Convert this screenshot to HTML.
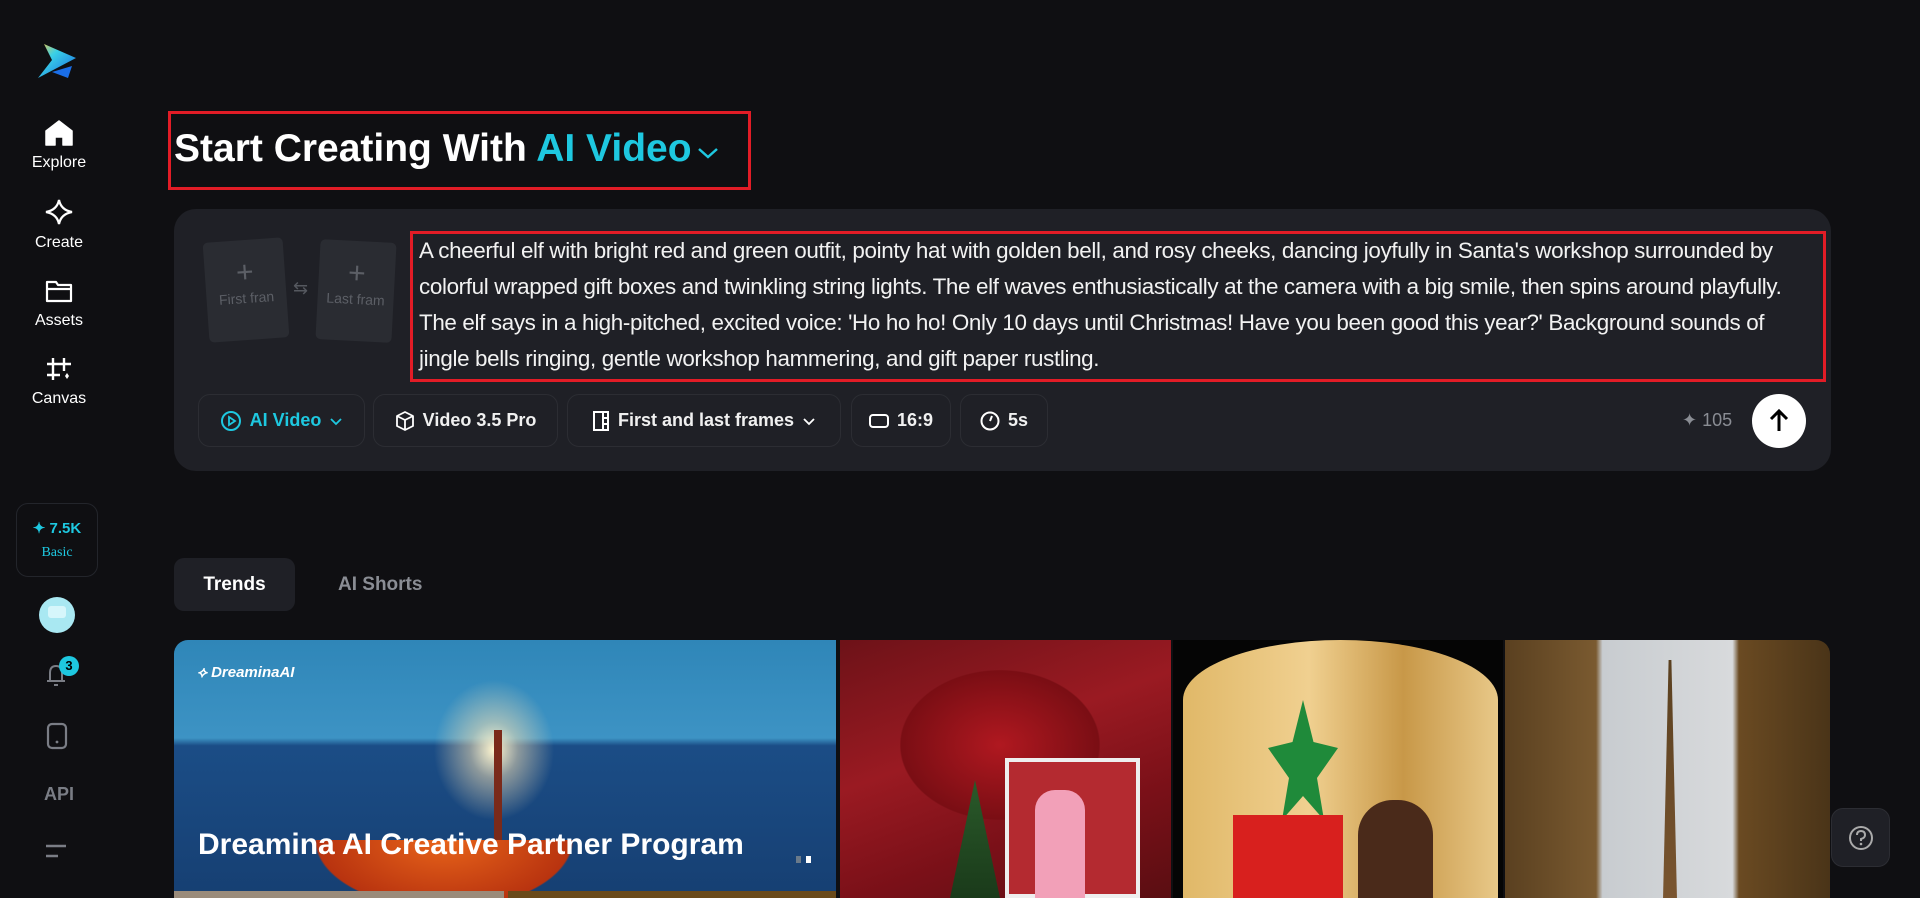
<!DOCTYPE html>
<html><head><meta charset="utf-8"><style>
*{margin:0;padding:0;box-sizing:border-box}
body{width:1920px;height:898px;background:#0f0f12;font-family:"Liberation Sans",sans-serif;color:#fff;overflow:hidden;position:relative}
.abs{position:absolute}
.nav{position:absolute;left:0;width:118px;text-align:center;font-size:16px;color:#fff}
.nav svg{display:block;margin:0 auto 8px}
.btn{position:absolute;top:394px;height:53px;border:1px solid #2c2d33;border-radius:12px;display:flex;align-items:center;justify-content:center;gap:8px;font-size:18px;font-weight:bold;color:#f0f0f0}
.card{position:absolute;top:640px;height:258px;overflow:hidden}
</style></head><body>
<!-- sidebar -->
<svg class="abs" style="left:38px;top:42px" width="40" height="38" viewBox="0 0 40 38"><defs><linearGradient id="lg" x1="0" y1="0" x2="1" y2="1"><stop offset="0" stop-color="#f5c542"/><stop offset=".35" stop-color="#3ad1e6"/><stop offset="1" stop-color="#1565e0"/></linearGradient></defs><path d="M6 2 L14 18 L0 36 L38 16 Z" fill="url(#lg)"/><path d="M14 30 L34 24 L30 36 Z" fill="#1a6ee8"/></svg>
<div class="nav" style="top:120px"><svg width="28" height="26" viewBox="0 0 28 26"><path d="M14 1 L27 11 V25 H18 V17 H10 V25 H1 V11 Z" fill="#fff" stroke="#fff" stroke-linejoin="round" stroke-width="1.5"/></svg>Explore</div>
<div class="nav" style="top:198px"><svg width="30" height="28" viewBox="0 0 30 28"><path d="M15 2 Q17 12 28 14 Q17 16 15 26 Q13 16 2 14 Q13 12 15 2Z" fill="none" stroke="#fff" stroke-width="2.2"/></svg>Create</div>
<div class="nav" style="top:278px"><svg width="28" height="26" viewBox="0 0 28 26"><path d="M2 4 H11 L13 7 H26 V23 H2 Z M2 11 H26" fill="none" stroke="#fff" stroke-width="2.2" stroke-linejoin="round"/></svg>Assets</div>
<div class="nav" style="top:356px"><svg width="28" height="26" viewBox="0 0 28 26"><path d="M8 2 V24 M19 2 V15 M2 8 H26 M2 19 H15" stroke="#fff" stroke-width="2.4"/><path d="M22 17 L24 20 L22 23 L20 20Z" fill="#fff"/></svg>Canvas</div>
<div class="abs" style="left:16px;top:503px;width:82px;height:74px;border:1px solid #23252b;border-radius:12px;text-align:center;color:#1ec8e0">
<div style="margin-top:15px;font-size:15px;font-weight:bold">✦ 7.5K</div>
<div style="margin-top:8px;font-size:14px;font-family:'Liberation Serif',serif">Basic</div></div>
<div class="abs" style="left:39px;top:597px;width:36px;height:36px;border-radius:50%;background:#a9e8f2"><div style="margin:9px auto;width:18px;height:12px;background:#d6f6fb;border-radius:3px"></div></div>
<svg class="abs" style="left:42px;top:660px" width="30" height="28" viewBox="0 0 30 28"><path d="M5 21 H23 M8 21 V13 Q8 6 14 6 Q20 6 20 13 V21 M12 25 H16" fill="none" stroke="#7a7d85" stroke-width="2"/></svg>
<div class="abs" style="left:59px;top:656px;width:20px;height:20px;border-radius:50%;background:#1ec8e0;color:#000;font-size:13px;font-weight:bold;text-align:center;line-height:20px">3</div>
<svg class="abs" style="left:46px;top:722px" width="22" height="28" viewBox="0 0 22 28"><rect x="2" y="2" width="18" height="24" rx="4" fill="none" stroke="#7a7d85" stroke-width="2.2"/><circle cx="11" cy="20" r="1.4" fill="#7a7d85"/></svg>
<div class="abs" style="left:0;width:118px;top:784px;text-align:center;font-size:18px;font-weight:bold;color:#7a7d85">API</div>
<svg class="abs" style="left:46px;top:843px" width="22" height="16"><path d="M0 3 H20 M0 13 H12" stroke="#7a7d85" stroke-width="2.5"/></svg>

<!-- heading -->
<div class="abs" style="left:168px;top:111px;width:583px;height:79px;border:3px solid #e21c26"></div>
<div class="abs" style="left:174px;top:127px;font-size:39px;font-weight:bold;white-space:nowrap">Start Creating With <span style="color:#1ec8e0">AI Video</span><svg width="24" height="16" viewBox="0 0 24 16" style="margin-left:4px"><path d="M3 4 L12 12 L21 4" fill="none" stroke="#1ec8e0" stroke-width="2.5"/></svg></div>

<!-- prompt panel -->
<div class="abs" style="left:174px;top:209px;width:1657px;height:262px;background:#1f2026;border-radius:22px"></div>
<div class="abs" style="left:206px;top:240px;width:80px;height:100px;background:#2a2c32;border-radius:5px;transform:rotate(-4deg);color:#5c5f66;text-align:center;font-size:14px"><div style="font-size:30px;margin-top:16px">+</div>First fran</div>
<div class="abs" style="left:293px;top:278px;color:#55585f;font-size:18px">⇆</div>
<div class="abs" style="left:318px;top:241px;width:76px;height:100px;background:#2a2c32;border-radius:5px;transform:rotate(3deg);color:#5c5f66;text-align:center;font-size:14px;overflow:hidden;white-space:nowrap"><div style="font-size:30px;margin-top:16px">+</div>Last fram</div>
<div class="abs" style="left:410px;top:231px;width:1416px;height:151px;border:3px solid #e21c26"></div>
<div class="abs" style="left:419px;top:233px;width:1392px;font-size:22.4px;letter-spacing:-0.35px;line-height:36px;color:#f2f2f2"> A cheerful elf with bright red and green outfit, pointy hat with golden bell, and rosy cheeks, dancing joyfully in Santa's workshop surrounded by colorful wrapped gift boxes and twinkling string lights. The elf waves enthusiastically at the camera with a big smile, then spins around playfully. The elf says in a high-pitched, excited voice: 'Ho ho ho! Only 10 days until Christmas! Have you been good this year?' Background sounds of jingle bells ringing, gentle workshop hammering, and gift paper rustling.</div>

<div class="btn" style="left:198px;width:167px;color:#1ec8e0"><svg width="22" height="22" viewBox="0 0 22 22"><circle cx="11" cy="11" r="9" fill="none" stroke="#1ec8e0" stroke-width="2"/><path d="M9 7 L15 11 L9 15Z" fill="none" stroke="#1ec8e0" stroke-width="1.8"/></svg>AI Video<svg width="14" height="10"><path d="M2 3 L7 8 L12 3" fill="none" stroke="#1ec8e0" stroke-width="1.8"/></svg></div>
<div class="btn" style="left:373px;width:185px"><svg width="20" height="22" viewBox="0 0 20 22"><path d="M10 2 L18 6 V16 L10 20 L2 16 V6 Z M2 6 L10 10 L18 6 M10 10 V20" fill="none" stroke="#fff" stroke-width="1.8" stroke-linejoin="round"/></svg>Video 3.5 Pro</div>
<div class="btn" style="left:567px;width:274px"><svg width="18" height="22" viewBox="0 0 18 22"><rect x="2" y="2" width="14" height="18" fill="none" stroke="#fff" stroke-width="2"/><path d="M11 2 V20 M11 8 H16 M11 14 H16" stroke="#fff" stroke-width="2"/></svg>First and last frames<svg width="14" height="10"><path d="M2 3 L7 8 L12 3" fill="none" stroke="#fff" stroke-width="1.8"/></svg></div>
<div class="btn" style="left:851px;width:100px"><svg width="20" height="14"><rect x="1" y="1" width="18" height="12" rx="3" fill="none" stroke="#fff" stroke-width="2"/></svg>16:9</div>
<div class="btn" style="left:960px;width:88px"><svg width="20" height="22" viewBox="0 0 20 22"><circle cx="10" cy="11" r="8.5" fill="none" stroke="#fff" stroke-width="2"/><path d="M10 11 L12 6" stroke="#fff" stroke-width="2"/></svg>5s</div>
<div class="abs" style="left:1682px;top:410px;font-size:18px;color:#8a8d94">✦ 105</div>
<div class="abs" style="left:1752px;top:394px;width:54px;height:54px;border-radius:50%;background:#fff"><svg width="54" height="54"><path d="M27 37 V17 M19 25 L27 17 L35 25" fill="none" stroke="#000" stroke-width="3"/></svg></div>

<!-- tabs -->
<div class="abs" style="left:174px;top:558px;width:121px;height:53px;background:#1f2026;border-radius:10px;font-size:19px;font-weight:bold;text-align:center;line-height:53px">Trends</div>
<div class="abs" style="left:338px;top:574px;font-size:19px;font-weight:bold;color:#8a8d94">AI Shorts</div>

<!-- cards -->
<div class="card" style="left:174px;width:662px;border-radius:14px 0 0 0;background:linear-gradient(180deg,#2f86b8 0%,#3d93c4 38%,#1b4d86 41%,#163f72 100%)">
<div class="abs" style="left:260px;top:40px;width:120px;height:140px;background:radial-gradient(closest-side,#fff6d0,rgba(255,230,180,.5) 40%,transparent)"></div>
<div class="abs" style="left:320px;top:90px;width:8px;height:130px;background:#7a2a1a"></div>
<div class="abs" style="left:120px;top:200px;width:300px;height:80px;background:radial-gradient(ellipse at 50% 0%,#e8641a,#b8330f 60%,transparent 61%)"></div>
<div class="abs" style="left:23px;top:24px;font-size:15px;font-style:italic;font-weight:bold">⟡ DreaminaAI</div>
<div class="abs" style="left:24px;top:188px;font-size:30px;font-weight:bold">Dreamina AI Creative Partner Program</div>
<div class="abs" style="left:622px;top:216px;width:5px;height:7px;background:#6a7a8a"></div><div class="abs" style="left:632px;top:216px;width:5px;height:7px;background:#fff"></div>
</div>
<div class="abs" style="left:174px;top:891px;width:330px;height:7px;background:#9a8b7a"></div>
<div class="abs" style="left:508px;top:891px;width:328px;height:7px;background:#6a4a1a"></div>
<div class="card" style="left:840px;width:331px;background:linear-gradient(160deg,#6d1218,#9a1a22 40%,#7a1018 70%,#5a0e12)">
<div class="abs" style="left:60px;top:30px;width:200px;height:150px;background:radial-gradient(ellipse,#b01820,#7a0e14 70%,transparent 71%)"></div>
<div class="abs" style="left:165px;top:118px;width:135px;height:140px;background:#b42a30;border:4px solid #eee"></div>
<div class="abs" style="left:195px;top:150px;width:50px;height:108px;background:#f2a0b8;border-radius:20px 20px 0 0"></div>
<div class="abs" style="left:110px;top:140px;width:50px;height:118px;background:linear-gradient(#2a5a2a,#1a3a1a);clip-path:polygon(50% 0,100% 100%,0 100%)"></div>
</div>
<div class="card" style="left:1173px;width:330px;background:#050505">
<div class="abs" style="left:10px;top:0;width:315px;height:300px;background:linear-gradient(90deg,#e0b868,#f0d090 40%,#c89848 70%,#e8c888);border-radius:50% 50% 0 0/20% 20% 0 0"></div>
<div class="abs" style="left:95px;top:60px;width:70px;height:120px;background:#1f8a3a;clip-path:polygon(50% 0,65% 35%,100% 40%,70% 65%,80% 100%,50% 80%,20% 100%,30% 65%,0 40%,35% 35%)"></div>
<div class="abs" style="left:185px;top:160px;width:75px;height:100px;background:#4a2a1a;border-radius:35px 35px 0 0"></div>
<div class="abs" style="left:60px;top:175px;width:110px;height:85px;background:#d8201e"></div>
</div>
<div class="card" style="left:1505px;width:325px;border-radius:0 14px 0 0;background:linear-gradient(90deg,#5a4020 0,#7a5a30 28%,#c8ccd0 30%,#d8dadc 70%,#6a4a22 72%,#4a3418)">
<div class="abs" style="left:158px;top:20px;width:14px;height:240px;background:linear-gradient(#5a4020,#7a5530);clip-path:polygon(40% 0,60% 0,100% 100%,0 100%)"></div>
</div>
<div class="abs" style="left:1831px;top:808px;width:59px;height:59px;background:#1f2026;border-radius:12px;border:1px solid #2c2d33"><svg width="59" height="59"><circle cx="29" cy="29" r="11" fill="none" stroke="#aaa" stroke-width="2"/><path d="M25 26 Q25 22 29 22 Q33 22 33 26 Q33 29 29 30 V32" fill="none" stroke="#aaa" stroke-width="2"/><circle cx="29" cy="35" r="1.3" fill="#aaa"/></svg></div>
</body></html>
